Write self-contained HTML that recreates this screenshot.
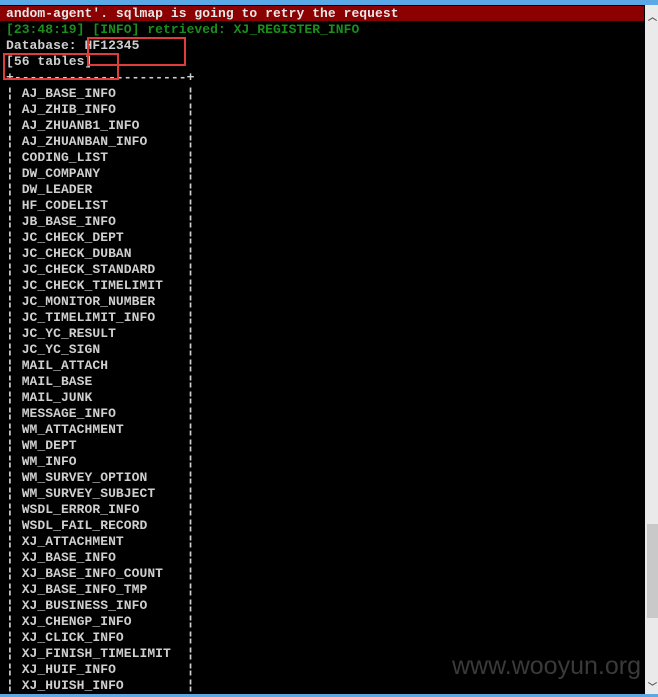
<!DOCTYPE html>
<html><head><meta charset="utf-8"><style>
body{margin:0;width:658px;height:697px;background:#000;overflow:hidden;position:relative;font-family:"Liberation Mono",monospace;font-size:13px;font-weight:bold;}
#top{position:absolute;left:0;top:0;width:658px;height:5px;background:#5aa9e6}
#bot{position:absolute;left:0;top:694px;width:658px;height:3px;background:#5aa9e6}
#red{position:absolute;left:0;top:6px;width:644px;height:15px;background:#8b0000}
#sb{position:absolute;left:645px;top:5px;width:13px;height:689px;background:#eaeaea}
#thumb{position:absolute;left:647px;top:524px;width:11px;height:94px;background:#c9c9c9}
pre{position:absolute;left:6px;top:6px;margin:0;font:inherit;line-height:16px;letter-spacing:0.05px;color:#c0c0c0;white-space:pre}
.r{color:#e8e8e8}.g{color:#1a8f1a}.w{color:#cfcfcf}
.box{position:absolute;border:2px solid #e03c3c}
#wm{position:absolute;left:452px;top:652px;color:#3a3a3a;font-family:"Liberation Sans",sans-serif;font-weight:normal;font-size:25px}
.ar{position:absolute;left:648px;color:#555;font-size:9px;font-family:"DejaVu Sans",sans-serif}
</style></head><body>
<div id="top"></div><div id="red"></div><div id="sb"></div><div id="thumb"></div><div id="bot"></div>
<div class="ar" style="top:10px">︿</div><div class="ar" style="top:680px">﹀</div>
<pre><span class="r">andom-agent'. sqlmap is going to retry the request</span>
<span class="g">[23:48:19] [INFO] retrieved: XJ_REGISTER_INFO</span>
<span class="w">Database: HF12345
[56 tables]
+----------------------+
¦ AJ_BASE_INFO         ¦
¦ AJ_ZHIB_INFO         ¦
¦ AJ_ZHUANB1_INFO      ¦
¦ AJ_ZHUANBAN_INFO     ¦
¦ CODING_LIST          ¦
¦ DW_COMPANY           ¦
¦ DW_LEADER            ¦
¦ HF_CODELIST          ¦
¦ JB_BASE_INFO         ¦
¦ JC_CHECK_DEPT        ¦
¦ JC_CHECK_DUBAN       ¦
¦ JC_CHECK_STANDARD    ¦
¦ JC_CHECK_TIMELIMIT   ¦
¦ JC_MONITOR_NUMBER    ¦
¦ JC_TIMELIMIT_INFO    ¦
¦ JC_YC_RESULT         ¦
¦ JC_YC_SIGN           ¦
¦ MAIL_ATTACH          ¦
¦ MAIL_BASE            ¦
¦ MAIL_JUNK            ¦
¦ MESSAGE_INFO         ¦
¦ WM_ATTACHMENT        ¦
¦ WM_DEPT              ¦
¦ WM_INFO              ¦
¦ WM_SURVEY_OPTION     ¦
¦ WM_SURVEY_SUBJECT    ¦
¦ WSDL_ERROR_INFO      ¦
¦ WSDL_FAIL_RECORD     ¦
¦ XJ_ATTACHMENT        ¦
¦ XJ_BASE_INFO         ¦
¦ XJ_BASE_INFO_COUNT   ¦
¦ XJ_BASE_INFO_TMP     ¦
¦ XJ_BUSINESS_INFO     ¦
¦ XJ_CHENGP_INFO       ¦
¦ XJ_CLICK_INFO        ¦
¦ XJ_FINISH_TIMELIMIT  ¦
¦ XJ_HUIF_INFO         ¦
¦ XJ_HUISH_INFO        ¦</span></pre>
<div class="box" style="left:87px;top:37px;width:95px;height:25px"></div>
<div class="box" style="left:3px;top:53px;width:112px;height:23px"></div>
<div id="wm">www.wooyun.org</div>
</body></html>
